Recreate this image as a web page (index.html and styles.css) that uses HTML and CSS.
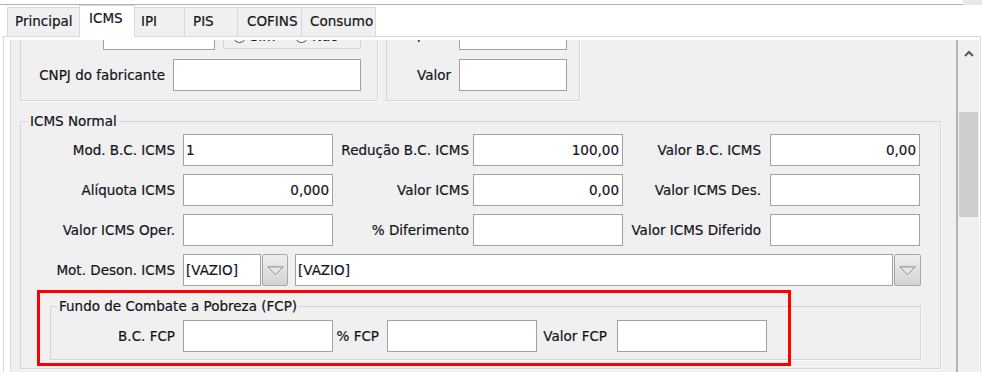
FILE: index.html
```html
<!DOCTYPE html>
<html lang="pt-BR">
<head>
<meta charset="utf-8">
<title>ICMS</title>
<link rel="stylesheet" href="styles.css">
</head>
<body>
<div class="topbar"><div class="topbar-line"></div><div class="topbar-corner"></div></div>
<div class="tabs">
  <div class="tab t-principal">Principal</div>
  <div class="tab active t-icms">ICMS</div>
  <div class="tab t-ipi">IPI</div>
  <div class="tab t-pis">PIS</div>
  <div class="tab t-cofins">COFINS</div>
  <div class="tab t-consumo">Consumo</div>
</div>
<div class="panel">
  <div class="scrollarea">
    <div class="viewport">
      <div class="content">
        <div class="top-groups">
          <div class="box box-left">
            <div class="rows rows-top">
              <div class="row">
                <span class="lbl lw-a"></span>
                <input class="fld w112" type="text" value="" readonly>
                <div class="radiobox">
                  <label class="radio r-sim"><span class="circle checked"></span>Sim</label>
                  <label class="radio"><span class="circle"></span>Não</label>
                </div>
              </div>
              <div class="row">
                <span class="lbl lw-b">CNPJ do fabricante</span>
                <input class="fld w188" type="text" value="" readonly>
              </div>
            </div>
          </div>
          <div class="box box-right">
            <div class="rows rows-top">
              <div class="row">
                <span class="lbl lw-c">Alíquota</span>
                <input class="fld w108" type="text" value="" readonly>
              </div>
              <div class="row">
                <span class="lbl lw-c">Valor</span>
                <input class="fld w108" type="text" value="" readonly>
              </div>
            </div>
          </div>
        </div>

        <fieldset class="group g-icms">
          <legend>ICMS Normal</legend>
          <div class="rows">
            <div class="row">
              <span class="lbl l1">Mod. B.C. ICMS</span>
              <input class="fld w150" type="text" value="1" readonly>
              <span class="lbl l2">Redução B.C. ICMS</span>
              <input class="fld w150 num" type="text" value="100,00" readonly>
              <span class="lbl l3">Valor B.C. ICMS</span>
              <input class="fld w150 num" type="text" value="0,00" readonly>
            </div>
            <div class="row">
              <span class="lbl l1">Alíquota ICMS</span>
              <input class="fld w150 num" type="text" value="0,000" readonly>
              <span class="lbl l2">Valor ICMS</span>
              <input class="fld w150 num" type="text" value="0,00" readonly>
              <span class="lbl l3">Valor ICMS Des.</span>
              <input class="fld w150 num" type="text" value="" readonly>
            </div>
            <div class="row">
              <span class="lbl l1">Valor ICMS Oper.</span>
              <input class="fld w150 num" type="text" value="" readonly>
              <span class="lbl l2">% Diferimento</span>
              <input class="fld w150 num" type="text" value="" readonly>
              <span class="lbl l3">Valor ICMS Diferido</span>
              <input class="fld w150 num" type="text" value="" readonly>
            </div>
            <div class="row">
              <span class="lbl l1">Mot. Deson. ICMS</span>
              <div class="combo">
                <input class="fld w78" type="text" value="[VAZIO]" readonly>
                <div class="cbtn w26"><svg width="17" height="9" viewBox="0 0 17 9"><path d="M0.8 0.8 H16.2 L9.2 8 Q8.5 8.6 7.8 8 Z" fill="#e6e6e6" stroke="#8e8e8e" stroke-width="1" stroke-linejoin="round"/></svg></div>
              </div>
              <div class="combo combo-wide">
                <input class="fld w598" type="text" value="[VAZIO]" readonly>
                <div class="cbtn w27"><svg width="17" height="9" viewBox="0 0 17 9"><path d="M0.8 0.8 H16.2 L9.2 8 Q8.5 8.6 7.8 8 Z" fill="#e6e6e6" stroke="#8e8e8e" stroke-width="1" stroke-linejoin="round"/></svg></div>
              </div>
            </div>
          </div>

          <fieldset class="group g-fcp">
            <legend>Fundo de Combate a Pobreza (FCP)</legend>
            <div class="row">
              <span class="lbl f1">B.C. FCP</span>
              <input class="fld w150" type="text" value="" readonly>
              <span class="lbl f2">% FCP</span>
              <input class="fld w150" type="text" value="" readonly>
              <span class="lbl f3">Valor FCP</span>
              <input class="fld w150" type="text" value="" readonly>
            </div>
          </fieldset>
        </fieldset>
      </div>
    </div>
    <div class="vscroll">
      <div class="up"><svg width="10" height="7" viewBox="0 0 10 7"><polyline points="1,6 5,2 9,6" fill="none" stroke="#5a5a5a" stroke-width="2"/></svg></div>
      <div class="thumb"></div>
    </div>
  </div>
</div>
<div class="highlight"></div>
</body>
</html>
```

FILE: styles.css
```css
* { box-sizing: border-box; }
html, body { margin: 0; padding: 0; background: #fff; overflow: hidden; }
body {
  width: 982px;
  height: 372px;
  position: relative;
  font-family: "DejaVu Sans", Verdana, sans-serif;
  font-size: 13.5px;
  color: #14141c;
  -webkit-text-stroke: 0.2px #14141c;
}

/* top strip */
.topbar { display: flex; height: 5px; }
.topbar-line { flex: 1; border-bottom: 1px solid #b2b2b2; }
.topbar-corner { width: 19px; background: #e8e8e8; }

/* tabs */
.tabs { display: flex; align-items: flex-end; height: 31px; padding-left: 7px; }
.tab {
  height: 29px;
  border: 1px solid #d9d9d9;
  border-bottom: 0;
  background: #f0f0f0;
  margin-left: -1px;
  padding-left: 7px;
  line-height: 26px;
  white-space: nowrap;
}
.tab:first-child { margin-left: 0; }
.tab.active {
  height: 32px;
  background: #fff;
  position: relative;
  margin-bottom: -1px;
  line-height: 25px;
  padding-left: 9px;
}
.t-principal { width: 73px; }
.t-icms { width: 56px; }
.t-ipi { width: 51px; padding-left: 6px; }
.t-pis { width: 54px; padding-left: 8px; }
.t-cofins { width: 65px; padding-left: 9px; }
.t-consumo { width: 75px; padding-left: 8px; }

/* panel */
.panel {
  margin-left: 3px;
  width: 978px;
  height: 340px;
  border: 1px solid #d9d9d9;
  background: #fff;
  padding: 3px 1px 0 6px;
}
.scrollarea { display: flex; height: 100%; }
.viewport {
  width: 948px;
  height: 100%;
  overflow: hidden;
  background: #f0f0f0;
  border-left: 1px solid #dcdcdc;
  border-right: 2px solid #b3b3b3;
}
.content { margin-top: -40px; padding-left: 9px; }

/* scrollbar */
.vscroll {
  width: 21px;
  height: 100%;
  background: #f0f0f0;
  display: flex;
  flex-direction: column;
  align-items: center;
}
.up { height: 26px; width: 100%; display: flex; align-items: center; justify-content: center; }
.thumb { margin-top: 46px; width: 19px; height: 105px; background: #cdcdcd; }

/* generic */
.rows { display: flex; flex-direction: column; gap: 8px; }
.row { display: flex; align-items: center; height: 32px; }
.lbl { text-align: right; white-space: nowrap; flex: none; }
.fld {
  height: 32px;
  margin: 0;
  border: 1px solid #a2a2a2;
  border-radius: 0;
  background: #fff;
  padding: 0 3px 0 2px;
  font: inherit;
  color: inherit;
  outline: none;
  flex: none;
}
.num { text-align: right; }
.w78 { width: 78px; }
.w108 { width: 108px; }
.w112 { width: 112px; }
.w150 { width: 150px; }
.w188 { width: 188px; }
.w598 { width: 598px; }

/* top (scrolled) groups */
.top-groups { display: flex; align-items: flex-start; }
.box {
  border: 1px solid #d6d6d6;
  box-shadow: 1px 1px 0 #fbfbfb;
  padding: 17px 0 9px 0;
}
.rows-top { gap: 9px; }
.box-left { width: 358px; }
.box-right { width: 194px; margin-left: 8px; }
.lw-a { width: 82px; padding-right: 8px; }
.lw-b { width: 152px; padding-right: 8px; }
.lw-c { width: 72px; padding-right: 8px; }
.radiobox {
  align-self: flex-start;
  margin-left: 8px;
  width: 138px;
  height: 31px;
  border: 1px solid #d6d6d6;
  display: flex;
  align-items: flex-end;
  padding: 0 0 4px 9px;
}
.radio { display: flex; align-items: center; gap: 4px; }
.r-sim { width: 62px; }
.circle {
  width: 13px;
  height: 13px;
  border: 1px solid #4a4a4a;
  border-radius: 50%;
  background: #fff;
  display: flex;
  align-items: center;
  justify-content: center;
}
.circle.checked::after {
  content: "";
  width: 5px;
  height: 5px;
  border-radius: 50%;
  background: #333;
}

/* fieldsets */
.group {
  margin: 0;
  min-width: 0;
  border: 1px solid #d6d6d6;
  box-shadow: 1px 1px 0 #fbfbfb;
}
.group legend {
  padding: 0 2px;
  margin-left: 7px;
  line-height: 16px;
}
.g-icms {
  margin-top: 12px;
  width: 921px;
  padding: 5px 0 8px 0;
}
.g-fcp {
  margin: 12px 0 0 29px;
  width: 871px;
  padding: 6px 0 7px 0;
}
.g-fcp legend { margin-left: 6px; }

.l1 { width: 162px; padding-right: 8px; }
.l2 { width: 140px; padding-right: 4px; }
.l3 { width: 147px; padding-right: 9px; }
.f1 { width: 132px; padding-right: 8px; }
.f2 { width: 54px; padding-right: 8px; }
.f3 { width: 80px; padding-right: 10px; }

/* combo boxes */
.combo { display: flex; align-items: center; flex: none; }
.combo-wide { margin-left: 7px; }
.cbtn {
  height: 32px;
  margin-left: 1px;
  border: 1px solid #a8a8a8;
  border-radius: 2px;
  background: linear-gradient(#eeeeee, #d3d3d3);
  display: flex;
  align-items: center;
  justify-content: center;
}
.w26 { width: 26px; }
.w27 { width: 27px; }

/* annotation */
.highlight {
  position: absolute;
  left: 37px;
  top: 290px;
  width: 754px;
  height: 76px;
  border: 3px solid #ff0000;
}
```
